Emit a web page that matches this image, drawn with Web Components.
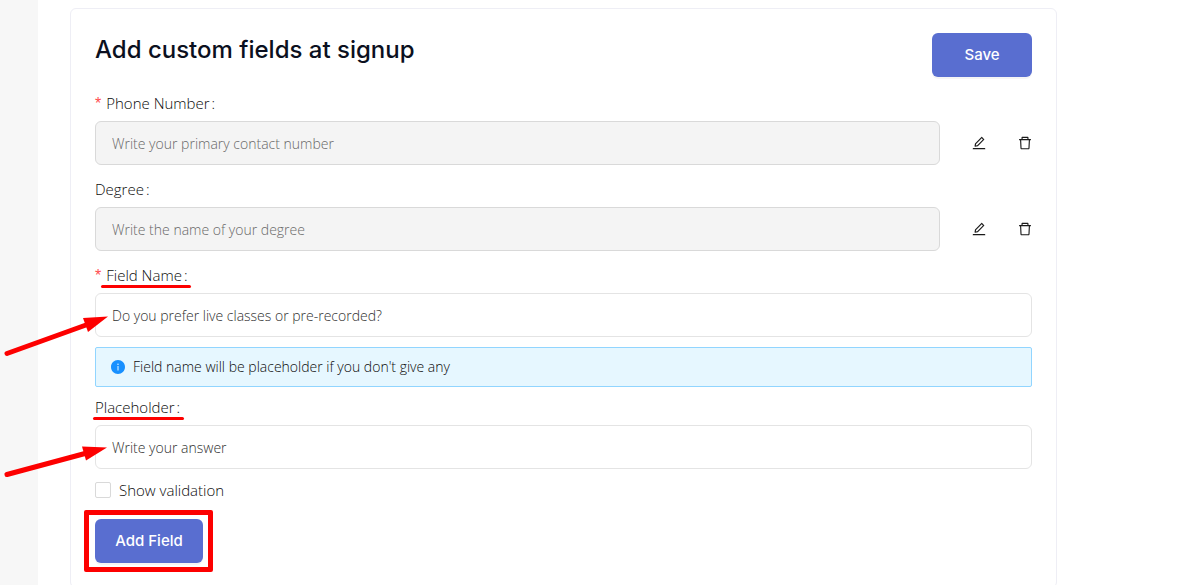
<!DOCTYPE html>
<html lang="en">
<head>
<meta charset="utf-8">
<meta name="viewport" content="width=device-width, initial-scale=1">
<title>Signup fields</title>
<style>
  html { scrollbar-width: none; }
  body { margin: 0; background: #fff; color: #0c0c0c; font: 300 14px/22px "Open Sans", sans-serif; }
</style>
</head>
<body>
<settings-page>
  <fields-card heading="Add custom fields at signup">
    <app-button slot="action">Save</app-button>
    <form-field label="Phone Number" placeholder="Write your primary contact number" required disabled>
      <icon-button slot="tools" icon="edit" label="Edit Phone Number"></icon-button>
      <icon-button slot="tools" icon="delete" label="Delete Phone Number"></icon-button>
    </form-field>
    <form-field label="Degree" placeholder="Write the name of your degree" disabled>
      <icon-button slot="tools" icon="edit" label="Edit Degree"></icon-button>
      <icon-button slot="tools" icon="delete" label="Delete Degree"></icon-button>
    </form-field>
    <form-field label="Field Name" placeholder="Do you prefer live classes or pre-recorded?" required marked>
      <mark-arrow slot="mark" kind="steep"></mark-arrow>
    </form-field>
    <info-alert>Field name will be placeholder if you don't give any</info-alert>
    <form-field label="Placeholder" placeholder="Write your answer" marked>
      <mark-arrow slot="mark" kind="shallow"></mark-arrow>
    </form-field>
    <check-option>Show validation</check-option>
    <mark-frame><app-button>Add Field</app-button></mark-frame>
  </fields-card>
</settings-page>

<script>
const define = (name, render) => customElements.define(name, class extends HTMLElement {
  constructor() {
    super();
    this.attachShadow({ mode: 'open' });
  }
  connectedCallback() {
    this.shadowRoot.innerHTML = '<style>:host,*{box-sizing:border-box}</style>' + render(this);
  }
});

define('settings-page', () => `
  <style>
    :host { display: flex; min-height: 100vh; overflow: hidden; }
    aside { flex: 0 0 38px; background: #f7f7f7; }
    main { flex: 1; min-width: 0; padding: 8px 122px 8px 32px; }
  </style>
  <aside></aside>
  <main><slot></slot></main>`);

define('fields-card', el => `
  <style>
    :host { display: block; border: 1px solid #eeeef5; border-radius: 6px; padding: 24px; }
    header { display: flex; justify-content: space-between; align-items: flex-start; margin-bottom: 16px; }
    h1 { margin: 0; color: #0b1020; font: 500 24px/34px Inter, sans-serif; }
    ::slotted(app-button[slot=action]) { --button-width: 100px; }
    ::slotted(form-field) { margin-bottom: 14px; }
    ::slotted(form-field[marked]), ::slotted(info-alert) { margin-bottom: 10px; }
    ::slotted(check-option) { margin-bottom: 18px; }
  </style>
  <header><h1>${el.getAttribute('heading')}</h1><slot name="action"></slot></header>
  <slot></slot>`);

define('app-button', () => `
  <style>
    :host { display: block; }
    button { display: block; width: var(--button-width, 108px); height: 44px; padding: 0; border: 0; border-radius: 6px;
      background: #596ed0; color: #fff; font: 500 15px/22px Inter, sans-serif;
      box-shadow: 0 2px 0 rgba(0,0,0,.04); cursor: pointer; }
  </style>
  <button type="button"><slot></slot></button>`);

define('form-field', el => {
  const has = n => el.hasAttribute(n);
  return `
  <style>
    :host { display: block; }
    .caption { display: flex; margin-bottom: 8px; }
    label { position: relative; font-size: 15px; line-height: 20px; }
    .star { color: #ff4d4f; font: 16px/16px "Liberation Sans", sans-serif; margin-right: 5px; }
    .colon { margin-left: 2px; }
    .line { position: absolute; left: -2px; right: -4px; bottom: -3px; height: 3px; border-radius: 2px; background: #fd0000; }
    .star ~ .line { left: 6px; }
    .row { position: relative; display: flex; align-items: center; gap: 32px; }
    input { flex: 1; min-width: 0; height: 44px; padding: 0 16px; border: 1px solid #e4e4e4; border-radius: 6px;
      background: #fff; color: #333; font: inherit; }
    input::placeholder { color: #303030; opacity: 1; }
    input:disabled { background: #f4f4f4; border-color: #d9d9d9; }
    input:disabled::placeholder { color: #686868; }
  </style>
  <div class="caption"><label for="field">${has('required') ? '<span class="star">*</span>' : ''}${el.getAttribute('label')}<span class="colon">:</span>${has('marked') ? '<span class="line"></span>' : ''}</label></div>
  <div class="row">
    <input id="field" type="text" placeholder="${el.getAttribute('placeholder')}"${has('disabled') ? ' disabled' : ''}>
    <slot name="tools"></slot>
    <slot name="mark"></slot>
  </div>`;
});

const icons = {
  edit: 'M257.7 752c2 0 4-.2 6-.5L431.9 722c2-.4 3.9-1.3 5.3-2.8l423.9-423.9a9.96 9.96 0 000-14.1L694.9 114.9c-1.9-1.9-4.4-2.9-7.1-2.9s-5.2 1-7.1 2.9L256.8 538.8c-1.5 1.5-2.4 3.3-2.8 5.3l-29.5 168.2a33.5 33.5 0 009.4 29.8c6.6 6.4 14.9 9.9 23.8 9.9zm67.4-174.4L687.8 215l73.3 73.3-362.7 362.6-88.9 15.7 15.6-89zM880 836H144c-17.7 0-32 14.3-32 32v36c0 4.4 3.6 8 8 8h784c4.4 0 8-3.6 8-8v-36c0-17.7-14.3-32-32-32z',
  delete: 'M360 184h-8c4.4 0 8-3.6 8-8v8h304v-8c0 4.4 3.6 8 8 8h-8v72h72v-80c0-35.3-28.7-64-64-64H352c-35.3 0-64 28.7-64 64v80h72v-72zm504 72H160c-17.7 0-32 14.3-32 32v32c0 4.4 3.6 8 8 8h60.4l24.7 523c1.6 34.1 29.8 61 63.9 61h454c34.2 0 62.3-26.8 63.9-61l24.7-523H888c4.4 0 8-3.6 8-8v-32c0-17.7-14.3-32-32-32zM731.3 840H292.7l-24.2-512h487l-24.2 512z'
};

define('icon-button', el => `
  <style>
    :host { display: block; }
    button { display: block; width: 14px; height: 14px; padding: 0; border: 0; background: none; color: #1a1a1a; cursor: pointer; }
    svg { display: block; overflow: visible; }
  </style>
  <button type="button" aria-label="${el.getAttribute('label')}">
    <svg width="14" height="14" viewBox="64 64 896 896" fill="currentColor" aria-hidden="true"><path d="${icons[el.getAttribute('icon')]}"/></svg>
  </button>`);

define('info-alert', () => `
  <style>
    :host { display: flex; align-items: center; gap: 8px; height: 40px; padding: 0 15px; border: 1px solid #91d5ff;
      border-radius: 2px; background: #e6f7ff; }
    svg { flex: none; }
  </style>
  <svg width="14" height="14" viewBox="64 64 896 896" fill="#1890ff" aria-hidden="true"><path d="M512 64C264.6 64 64 264.6 64 512s200.6 448 448 448 448-200.6 448-448S759.4 64 512 64zm32 664c0 4.4-3.6 8-8 8h-48c-4.4 0-8-3.6-8-8V456c0-4.4 3.6-8 8-8h48c4.4 0 8 3.6 8 8v272zm-32-344a48.01 48.01 0 010-96 48.01 48.01 0 010 96z"/></svg>
  <span><slot></slot></span>`);

define('check-option', () => `
  <style>
    :host { display: flex; }
    label { display: flex; align-items: center; gap: 8px; font-size: 15px; }
    input { appearance: none; width: 16px; height: 16px; margin: 0; border: 1px solid #d9d9d9; border-radius: 2px; background: #fff; }
    input:checked { background: #596ed0; }
  </style>
  <label><input type="checkbox"><span><slot></slot></span></label>`);

define('mark-arrow', el => `
  <style>
    :host { position: absolute; left: -92px; bottom: -24px; pointer-events: none; }
    :host([kind=shallow]) { bottom: -10px; }
    svg { display: block; }
  </style>
  ${el.getAttribute('kind') === 'steep'
    ? '<svg width="108" height="48" aria-hidden="true"><path d="M4 40.500L83 12" stroke="#fd0000" stroke-width="5" stroke-linecap="round"/><path d="M105 3.500L80 5L85 19Z" fill="#fd0000"/></svg>'
    : '<svg width="108" height="40" aria-hidden="true"><path d="M4 35.500L82 14.500" stroke="#fd0000" stroke-width="5" stroke-linecap="round"/><path d="M104 8.500L79 7.500L83 21.500Z" fill="#fd0000"/></svg>'}`);

define('mark-frame', () => `
  <style>
    :host { display: block; position: relative; width: fit-content; }
    i { position: absolute; inset: -9px -10px -9px -11px; border: 5px solid #fd0000; border-radius: 2px; pointer-events: none; }
  </style>
  <slot></slot><i></i>`);
</script>
</body>
</html>
